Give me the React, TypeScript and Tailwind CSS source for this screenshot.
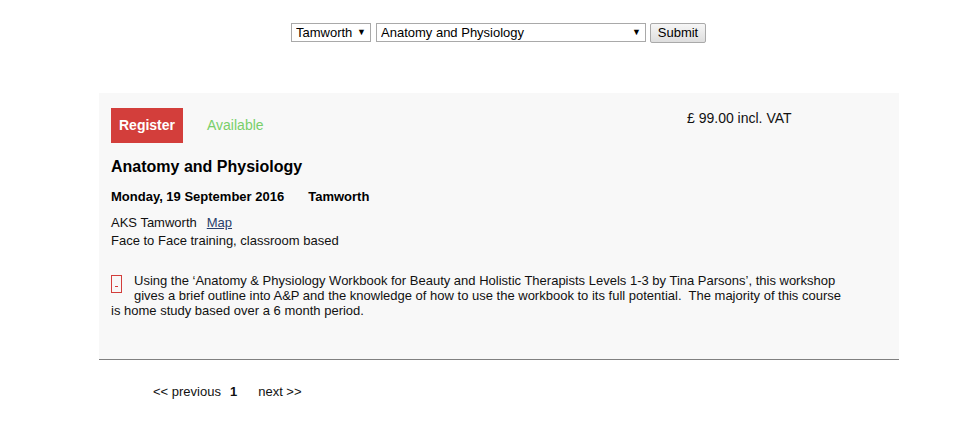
import React from 'react';

const font = { fontFamily: '"Liberation Sans", Arial, sans-serif' };

function FakeSelect({ value, width, options }: { value: string; width: string; options: string[] }) {
  return (
    <div className={`relative ${width} h-[19px]`}>
      <select
        defaultValue={value}
        className="w-full h-full appearance-none bg-white border border-[#a9a9a9] pl-[4px] pr-[16px] text-[13px] leading-[17px] text-black outline-none"
      >
        {options.map(o => (
          <option key={o}>{o}</option>
        ))}
      </select>
      <span className="absolute right-[5px] top-[3px] text-[9px] leading-[12px] text-black pointer-events-none">▼</span>
    </div>
  );
}

export default function App() {
  return (
    <div className="w-[964px] h-[437px] bg-white text-[#222] text-[13px]" style={font}>
      <form className="flex items-start gap-[5px] pl-[291px] pt-[23px]">
        <FakeSelect value="Tamworth" width="w-[80px]" options={['Tamworth']} />
        <FakeSelect value="Anatomy and Physiology" width="w-[270px]" options={['Anatomy and Physiology']} />
        <button
          type="button"
          className="ml-[-1px] h-[20px] w-[56px] border border-[#a9a9a9] rounded-[2px] bg-gradient-to-b from-[#f6f6f6] to-[#dedede] text-[13px] leading-[16px] text-black"
        >
          Submit
        </button>
      </form>

      <div className="ml-[99px] mt-[50px] w-[800px] bg-[#f8f8f8] border-b border-[#808080] px-[12px] pt-[15px] pb-[41px]">
        <div className="flex justify-between">
          <div className="flex items-center">
            <button type="button" className="w-[72px] h-[35px] bg-[#d33e3b] text-white font-bold text-[14px]">
              Register
            </button>
            <span className="ml-[24px] text-[14px] text-[#78cf6a]">Available</span>
          </div>
          <div className="w-[200px] text-[14px] text-[#111]">£ 99.00 incl. VAT</div>
        </div>

        <h2 className="mt-[14px] text-[16px] font-bold text-black leading-[20px]">Anatomy and Physiology</h2>

        <div className="mt-[12px] flex font-bold text-black leading-[16px]">
          <span>Monday, 19 September 2016</span>
          <span className="ml-[24px]">Tamworth</span>
        </div>

        <div className="mt-[9px] leading-[18px] text-[#111]">
          <div>
            AKS Tamworth<span className="ml-[10px] underline text-[#2a3f6b]">Map</span>
          </div>
          <div>Face to Face training, classroom based</div>
        </div>

        <div className="mt-[23px] leading-[15px] text-[#111]">
          <div className="float-left mr-[12px] mt-[2px] w-[11px] h-[18px] border border-[#d33e3b] flex items-end justify-center pb-[5px]">
            <div className="w-[3px] h-[1px] bg-[#d33e3b]" />
          </div>
          Using the ‘Anatomy &amp; Physiology Workbook for Beauty and Holistic Therapists Levels 1-3 by Tina Parsons’, this workshop
          <br />
          gives a brief outline into A&amp;P and the knowledge of how to use the workbook to its full potential.&nbsp; The majority of this course
          <br />
          is home study based over a 6 month period.
        </div>
      </div>

      <div className="mt-[22px] pl-[153px] flex text-[13px] text-[#111]">
        <span>&lt;&lt; previous</span>
        <span className="ml-[9px] font-bold">1</span>
        <span className="ml-[21px]">next &gt;&gt;</span>
      </div>
    </div>
  );
}
